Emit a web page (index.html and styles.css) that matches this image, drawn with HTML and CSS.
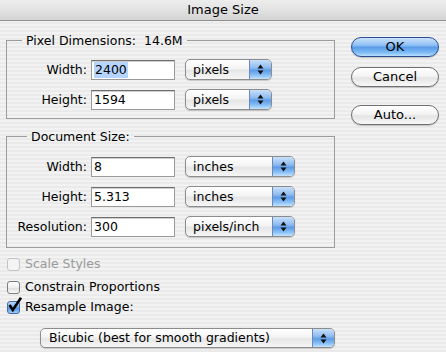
FILE: index.html
```html
<!DOCTYPE html>
<html>
<head>
<meta charset="utf-8">
<link rel="stylesheet" href="styles.css">
</head>
<body>
<div class="window">
  <div class="titlebar">Image Size</div>
  <div class="body">
    <div class="main">
      <fieldset class="group g1">
        <legend>Pixel Dimensions:&nbsp; 14.6M</legend>
        <div class="row">
          <span class="label">Width:</span>
          <span class="field"><span class="hl">2400</span></span>
          <span class="popup short"><span class="ptext">pixels</span><span class="stepper"><svg width="7" height="11" viewBox="0 0 7 11"><path d="M3.5 0.5 L6.5 4.5 L0.5 4.5 Z M3.5 10.5 L6.5 6.5 L0.5 6.5 Z" fill="#111"/></svg></span></span>
        </div>
        <div class="row">
          <span class="label">Height:</span>
          <span class="field">1594</span>
          <span class="popup short"><span class="ptext">pixels</span><span class="stepper"><svg width="7" height="11" viewBox="0 0 7 11"><path d="M3.5 0.5 L6.5 4.5 L0.5 4.5 Z M3.5 10.5 L6.5 6.5 L0.5 6.5 Z" fill="#111"/></svg></span></span>
        </div>
      </fieldset>
      <fieldset class="group g2">
        <legend>Document Size:</legend>
        <div class="row">
          <span class="label">Width:</span>
          <span class="field">8</span>
          <span class="popup long"><span class="ptext">inches</span><span class="stepper"><svg width="7" height="11" viewBox="0 0 7 11"><path d="M3.5 0.5 L6.5 4.5 L0.5 4.5 Z M3.5 10.5 L6.5 6.5 L0.5 6.5 Z" fill="#111"/></svg></span></span>
        </div>
        <div class="row">
          <span class="label">Height:</span>
          <span class="field">5.313</span>
          <span class="popup long"><span class="ptext">inches</span><span class="stepper"><svg width="7" height="11" viewBox="0 0 7 11"><path d="M3.5 0.5 L6.5 4.5 L0.5 4.5 Z M3.5 10.5 L6.5 6.5 L0.5 6.5 Z" fill="#111"/></svg></span></span>
        </div>
        <div class="row">
          <span class="label">Resolution:</span>
          <span class="field">300</span>
          <span class="popup long"><span class="ptext">pixels/inch</span><span class="stepper"><svg width="7" height="11" viewBox="0 0 7 11"><path d="M3.5 0.5 L6.5 4.5 L0.5 4.5 Z M3.5 10.5 L6.5 6.5 L0.5 6.5 Z" fill="#111"/></svg></span></span>
        </div>
      </fieldset>
      <div class="check disabled c1"><span class="box"></span><span>Scale Styles</span></div>
      <div class="check c2"><span class="box"></span><span>Constrain Proportions</span></div>
      <div class="check c3"><span class="box checked"><svg width="16" height="16" viewBox="0 0 16 16"><path d="M2.5 8 L5.8 13 L14 0.8" fill="none" stroke="#000" stroke-width="2.6" stroke-linejoin="miter"/></svg></span><span>Resample Image:</span></div>
      <div class="popup wide"><span class="ptext">Bicubic (best for smooth gradients)</span><span class="stepper"><svg width="7" height="11" viewBox="0 0 7 11"><path d="M3.5 0.5 L6.5 4.5 L0.5 4.5 Z M3.5 10.5 L6.5 6.5 L0.5 6.5 Z" fill="#111"/></svg></span></div>
    </div>
    <div class="buttons">
      <div class="btn default">OK</div>
      <div class="btn cancel">Cancel</div>
      <div class="btn auto">Auto...</div>
    </div>
  </div>
</div>
</body>
</html>
```
FILE: styles.css
```css
html, body {
  margin: 0;
  padding: 0;
}
body {
  width: 446px;
  height: 352px;
  overflow: hidden;
  font-family: "DejaVu Sans", "Lucida Grande", sans-serif;
  font-size: 12.5px;
  color: #000;
  background: repeating-linear-gradient(to bottom, #f2f2f2 0px, #f2f2f2 2px, #eaeaea 2px, #eaeaea 4px);
}
.window {
  width: 446px;
  height: 352px;
}
.titlebar {
  height: 20px;
  line-height: 20px;
  text-align: center;
  font-size: 13px;
  border-bottom: 1px solid #8e8e8e;
  background: linear-gradient(to bottom, #ededed 0%, #e2e2e2 50%, #d4d4d4 100%);
}
.body {
  display: flex;
  padding: 12px 0 0 6px;
}
.main {
  width: 329px;
  display: flex;
  flex-direction: column;
}
.group {
  margin: 0;
  padding: 0;
  border: 1px solid #9c9c9c;
  min-inline-size: 0;
}
.group legend {
  margin-left: 15px;
  padding: 0 4px;
  line-height: 15px;
}
.g1 {
  padding-top: 11px;
  padding-bottom: 8px;
}
.g2 {
  margin-top: 10px;
  padding-top: 12px;
  padding-bottom: 10px;
}
.g2 legend {
  margin-left: 20px;
}
.row {
  display: flex;
  align-items: center;
  height: 21px;
}
.row + .row {
  margin-top: 9px;
}
.label {
  width: 80px;
  text-align: right;
  margin-right: 4px;
}
.field {
  box-sizing: border-box;
  width: 84px;
  height: 20px;
  line-height: 17px;
  padding-left: 2px;
  background: #fff;
  border: 1px solid #9a9a9a;
  border-top-color: #6e6e6e;
  box-shadow: inset 0 1px 0 #cfcfcf;
  margin-right: 10px;
}
.hl {
  background: #b5d5ff;
  display: inline-block;
  padding: 0 1px;
  line-height: 16px;
}
.popup {
  box-sizing: border-box;
  height: 21px;
  display: flex;
  align-items: stretch;
  border: 1px solid #8c8c8c;
  border-radius: 5px;
  overflow: hidden;
  background: linear-gradient(to bottom, #ffffff 0%, #f4f4f4 45%, #e6e6e6 55%, #f6f6f6 100%);
  box-shadow: 0 1px 1px rgba(0,0,0,0.18);
}
.popup .ptext {
  flex: 1;
  padding-left: 7px;
  line-height: 19px;
  white-space: nowrap;
}
.popup .stepper {
  width: 21px;
  display: flex;
  align-items: center;
  justify-content: center;
  border-left: 1px solid #6f86b8;
  background: linear-gradient(to bottom, #c9e0fa 0%, #8fbcf0 40%, #5d9ce6 55%, #89c0f6 80%, #c4e3ff 100%);
}
.popup.short {
  width: 87px;
}
.popup.long {
  width: 110px;
}
.popup.wide {
  width: 295px;
  height: 20px;
  margin-left: 34px;
  margin-top: 12px;
}
.popup.wide .ptext {
  padding-left: 8px;
  line-height: 18px;
}
.check {
  display: flex;
  align-items: center;
  height: 18px;
  line-height: 18px;
  padding-left: 1px;
}
.check.c1 {
  margin-top: 7px;
}
.check.c2 {
  margin-top: 5px;
}
.check.c3 {
  margin-top: 2px;
}
.check .box {
  position: relative;
  box-sizing: border-box;
  width: 13px;
  height: 13px;
  border: 1px solid #7d7d7d;
  border-radius: 3px;
  margin-right: 5px;
  background: linear-gradient(to bottom, #ffffff 0%, #f0f0f0 50%, #e0e0e0 60%, #fafafa 100%);
}
.check.disabled {
  color: #9b9b9b;
}
.check.disabled .box {
  border-color: #c4c4c4;
  background: #f4f4f4;
}
.check .box.checked {
  border-color: #4a6aa8;
  background: linear-gradient(to bottom, #b8d6f7 0%, #7eb2ee 45%, #4f92e2 55%, #9fcdf8 100%);
}
.check .box svg {
  position: absolute;
  left: -1px;
  top: -5px;
}
.buttons {
  margin-left: 16px;
  width: 88px;
  display: flex;
  flex-direction: column;
  padding-top: 4px;
}
.btn {
  box-sizing: border-box;
  height: 20px;
  line-height: 18px;
  text-align: center;
  font-size: 13px;
  border-radius: 10px;
  border: 1px solid #707070;
  background: linear-gradient(to bottom, #ffffff 0%, #f4f4f4 45%, #e4e4e4 55%, #f8f8f8 100%);
  box-shadow: 0 1px 1px rgba(0,0,0,0.2);
}
.btn.default {
  border-color: #2c4b93;
  background: linear-gradient(to bottom, #cbe2fb 0%, #8fc0f5 40%, #5a9ce8 52%, #7dbaf5 80%, #b7e0ff 100%);
}
.btn.cancel {
  margin-top: 10px;
}
.btn.auto {
  margin-top: 18px;
}
```
